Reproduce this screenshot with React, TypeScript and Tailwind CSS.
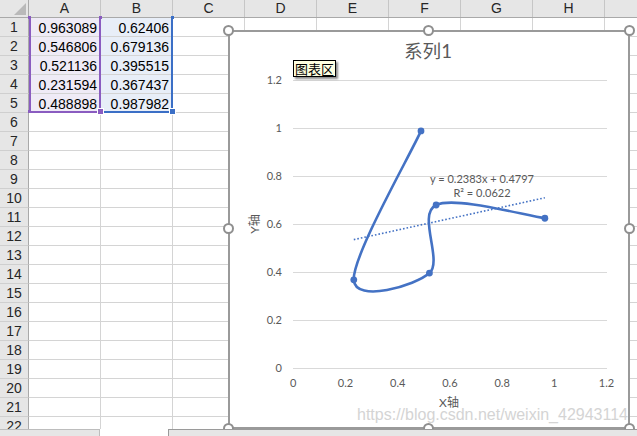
import React from "react";

const COLS = ["A", "B", "C", "D", "E", "F", "G", "H"];
const DATA: [string, string][] = [
  ["0.963089", "0.62406"],
  ["0.546806", "0.679136"],
  ["0.521136", "0.395515"],
  ["0.231594", "0.367437"],
  ["0.488898", "0.987982"],
];
const PTS = DATA.map(([x, y]) => [parseFloat(x), parseFloat(y)]);

const px = (x: number) => 293.3 + x * 261.2;
const py = (y: number) => 368 - y * 240;

function smoothPath(p: number[][]) {
  const s = p.map(([x, y]) => [px(x), py(y)]);
  let d = `M${s[0][0]},${s[0][1]}`;
  for (let i = 0; i < s.length - 1; i++) {
    const p0 = s[i - 1] || s[i];
    const p1 = s[i];
    const p2 = s[i + 1];
    const p3 = s[i + 2] || s[i + 1];
    const c1x = p1[0] + (p2[0] - p0[0]) / 6;
    const c1y = p1[1] + (p2[1] - p0[1]) / 6;
    const c2x = p2[0] - (p3[0] - p1[0]) / 6;
    const c2y = p2[1] - (p3[1] - p1[1]) / 6;
    d += ` C${c1x},${c1y} ${c2x},${c2y} ${p2[0]},${p2[1]}`;
  }
  return d;
}

const FONT = "Lato, 'Noto Sans CJK SC', sans-serif";

function Handle({ className }: { className: string }) {
  return (
    <div
      className={`absolute w-[11px] h-[11px] rounded-full bg-white border-2 border-[#8f8f8f] ${className}`}
    />
  );
}

function Chart() {
  const yTicks = ["1.2", "1", "0.8", "0.6", "0.4", "0.2", "0"];
  const xTicks = ["0", "0.2", "0.4", "0.6", "0.8", "1", "1.2"];
  const tx1 = 0.231594;
  const tx2 = 0.963089;
  const f = (x: number) => 0.2383 * x + 0.4797;
  return (
    <div className="absolute left-[228px] top-[30px] w-[402px] h-[399px] border-2 border-[#9a9a9a] bg-white">
      <svg
        className="absolute left-0 top-0"
        width={398}
        height={395}
        viewBox="0 0 398 395"
      >
        <g transform="translate(-230,-32)">
          <text
            x={428}
            y={58}
            textAnchor="middle"
            fontSize={18.6}
            fill="#595959"
            fontFamily={FONT}
          >
            系列1
          </text>
          {yTicks.map((t, i) => (
            <g key={t}>
              <line
                x1={293}
                x2={607}
                y1={80 + i * 48 + 0.5}
                y2={80 + i * 48 + 0.5}
                stroke="#d9d9d9"
                strokeWidth={1}
              />
              <text
                x={282}
                y={80 + i * 48 + 4}
                textAnchor="end"
                fontSize={11}
                fill="#595959"
                fontFamily={FONT}
              >
                {t}
              </text>
            </g>
          ))}
          {xTicks.map((t, i) => (
            <text
              key={t}
              x={293.3 + i * 52.2}
              y={387}
              textAnchor="middle"
              fontSize={11}
              fill="#595959"
              fontFamily={FONT}
            >
              {t}
            </text>
          ))}
          <text
            x={449}
            y={407}
            textAnchor="middle"
            fontSize={12}
            fill="#595959"
            fontFamily={FONT}
          >
            X轴
          </text>
          <text
            transform="translate(259,224) rotate(-90)"
            textAnchor="middle"
            fontSize={12}
            fill="#595959"
            fontFamily={FONT}
          >
            Y轴
          </text>
          <line
            x1={px(tx1)}
            y1={py(f(tx1))}
            x2={px(tx2)}
            y2={py(f(tx2))}
            stroke="#4472c4"
            strokeWidth={1.6}
            strokeDasharray="1.6 2"
          />
          <path
            d={smoothPath(PTS)}
            fill="none"
            stroke="#4472c4"
            strokeWidth={2.6}
            strokeLinecap="round"
          />
          {PTS.map(([x, y], i) => (
            <circle key={i} cx={px(x)} cy={py(y)} r={3.4} fill="#4472c4" />
          ))}
          <text
            x={482}
            y={183}
            textAnchor="middle"
            fontSize={11}
            fill="#595959"
            fontFamily={FONT}
          >
            y = 0.2383x + 0.4797
          </text>
          <text
            x={482}
            y={197}
            textAnchor="middle"
            fontSize={11}
            fill="#595959"
            fontFamily={FONT}
          >
            R² = 0.0622
          </text>
        </g>
      </svg>
      <div className="absolute left-[63px] top-[28px] h-[17px] px-[1px] border border-black bg-[#ffffe1] text-[13px] leading-[15px] text-black shadow-[2px_2px_2px_rgba(0,0,0,0.45)] [font-family:'Noto_Sans_CJK_SC',sans-serif]">
        图表区
      </div>
      <div className="absolute left-[127px] top-[374px] whitespace-nowrap text-[16px] leading-[18px] text-[#d4d4d4] [font-family:'Liberation_Sans',Arial,sans-serif]">
        https://blog.csdn.net/weixin_42943114
      </div>
      <Handle className="left-[-7px] top-[-7px]" />
      <Handle className="left-[193px] top-[-7px]" />
      <Handle className="right-[-7px] top-[-7px]" />
      <Handle className="left-[-7px] top-[191px]" />
      <Handle className="right-[-7px] top-[191px]" />
      <Handle className="left-[-7px] bottom-[-7px]" />
      <Handle className="left-[193px] bottom-[-7px]" />
      <Handle className="right-[-7px] bottom-[-7px]" />
    </div>
  );
}

export default function App() {
  const rows = Array.from({ length: 22 }, (_, i) => i + 1);
  return (
    <div className="relative w-[637px] h-[436px] overflow-hidden bg-white flex flex-col [font-family:'Liberation_Sans',Arial,sans-serif] text-[14px] text-black">
      <div className="flex-1 overflow-hidden">
        {/* column header */}
        <div className="flex h-[18px] border-b border-[#a9a9a9] bg-[#e6e6e6]">
          <div className="relative w-[29px] shrink-0 border-r border-[#a9a9a9]">
            <svg className="absolute left-[14px] top-[3px]" width="12" height="12" viewBox="0 0 12 12">
              <polygon points="12,0 12,12 0,12" fill="#b9b9b9" />
            </svg>
          </div>
          {COLS.map((c) => (
            <div
              key={c}
              className="w-[72px] shrink-0 border-r border-[#c6c6c6] text-center leading-[17px] text-[14px] text-[#262626]"
            >
              {c}
            </div>
          ))}
          <div className="flex-1" />
        </div>
        {rows.map((r) => {
          const d = DATA[r - 1];
          return (
            <div key={r} className="flex h-[19px]">
              <div className="w-[29px] shrink-0 bg-[#e6e6e6] border-r border-b border-r-[#a9a9a9] border-b-[#cfcfcf] text-center leading-[19px] text-[14px] text-[#262626]">
                {r}
              </div>
              {COLS.map((c, ci) => (
                <div
                  key={c}
                  className={`w-[72px] shrink-0 border-r border-b border-[#d4d4d4] text-right pr-[3px] leading-[20px] text-[14px] ${
                    d && ci === 0 ? "bg-[#efebf6]" : d && ci === 1 ? "bg-[#e8eef8]" : ""
                  }`}
                >
                  {d && ci < 2 ? d[ci] : ""}
                </div>
              ))}
              <div className="flex-1 border-b border-[#d4d4d4]" />
            </div>
          );
        })}
      </div>

      {/* selection outlines */}
      <div className="absolute left-[29px] top-[18px] w-[72px] h-[95px] border-l-2 border-r-2 border-b-2 border-[#8a5cc0]" />
      <div className="absolute left-[101px] top-[18px] w-[72px] h-[95px] border-r-2 border-b-2 border-[#3b6fc6]" />
      <div className="absolute left-[28px] top-[16px] w-[3px] h-[3px] bg-[#8a5cc0]" />
      <div className="absolute left-[99px] top-[16px] w-[3px] h-[3px] bg-[#8a5cc0]" />
      <div className="absolute left-[171px] top-[16px] w-[3px] h-[3px] bg-[#3b6fc6]" />
      <div className="absolute left-[28px] top-[110px] w-[3px] h-[3px] bg-[#8a5cc0]" />
      <div className="absolute left-[98px] top-[109px] w-[5px] h-[5px] bg-[#8a5cc0] outline outline-1 outline-white" />
      <div className="absolute left-[170px] top-[109px] w-[5px] h-[5px] bg-[#3b6fc6] outline outline-1 outline-white" />

      <Chart />

      {/* bottom bar */}
      <div className="relative z-10 flex h-[7px] shrink-0 bg-white">
        <div className="w-[100px] bg-[#e6e6e6] border-t border-r border-[#bdbdbd]" />
        <div className="w-[68px] bg-white" />
        <div className="flex-1 bg-[#e6e6e6] border-t border-l border-[#9a9a9a]" />
      </div>
    </div>
  );
}
